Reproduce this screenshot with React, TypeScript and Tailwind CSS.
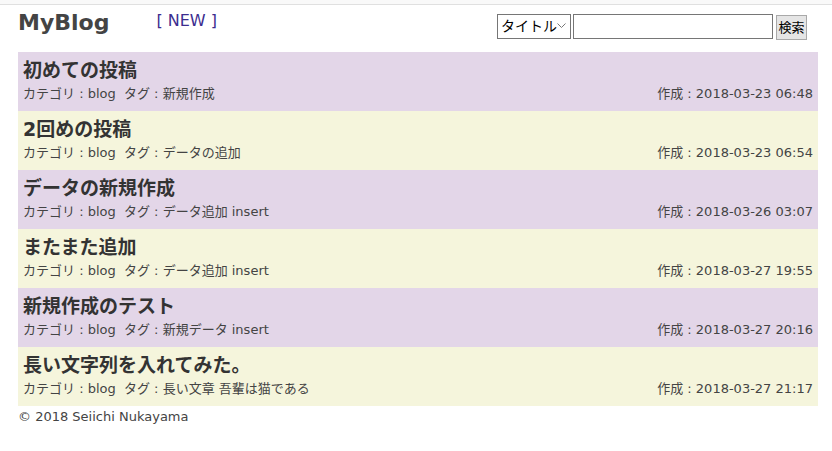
const posts = [
  { title: '初めての投稿', tags: '新規作成', date: '2018-03-23 06:48' },
  { title: '2回めの投稿', tags: 'データの追加', date: '2018-03-23 06:54' },
  { title: 'データの新規作成', tags: 'データ追加 insert', date: '2018-03-26 03:07' },
  { title: 'またまた追加', tags: 'データ追加 insert', date: '2018-03-27 19:55' },
  { title: '新規作成のテスト', tags: '新規データ insert', date: '2018-03-27 20:16' },
  { title: '長い文字列を入れてみた。', tags: '長い文章 吾輩は猫である', date: '2018-03-27 21:17' },
];

export default function App() {
  return (
    <div className="w-[832px] h-[451px] bg-white text-[#444] font-['Verdana','DejaVu_Sans','Noto_Sans_CJK_JP',sans-serif]">
      <div className="h-[5px] bg-[#f9f9f9] border-b border-[#e0e0e0]" />
      <div className="ml-[18px] mr-[14px]">
        <header className="h-[47px] flex items-start">
          <h1 className="mt-[3px] text-[22px] leading-[30px] font-bold text-[#444]">MyBlog</h1>
          <a className="ml-[47px] mt-[5px] text-[16px] leading-[22px] text-[#3c2d8f]">[ NEW ]</a>
          <form className="ml-auto mt-[9px] mr-[11px] flex items-start gap-[2px]">
            <div className="relative w-[74px] h-[25px]">
              <select className="appearance-none w-full h-full border border-[#767676] bg-white text-[14px] text-black pl-[3px]">
                <option>タイトル</option>
              </select>
              <svg className="absolute right-[5px] top-[9px] pointer-events-none" width="9" height="6" viewBox="0 0 9 6" fill="none" stroke="#777" strokeWidth="1">
                <path d="M0.5 0.5 L4.5 4.5 L8.5 0.5" />
              </svg>
            </div>
            <input className="w-[200px] h-[25px] border border-[#767676] bg-white" />
            <button className="ml-[1px] mt-[1px] w-[31px] h-[25px] border border-[#a9a9a9] bg-[#e5e5e5] text-[13px] text-black">検索</button>
          </form>
        </header>
        {posts.map((p, i) => (
          <div key={i} className={`h-[59px] px-[5px] pt-[6px] ${i % 2 === 0 ? 'bg-[#e3d6e8]' : 'bg-[#f5f5dc]'}`}>
            <div className="text-[19px] leading-[24px] font-bold text-[#333]">{p.title}</div>
            <div className="mt-[2px] flex text-[13px] leading-[20px]">
              <span>カテゴリ : blog&nbsp;&nbsp;タグ : {p.tags}</span>
              <span className="ml-auto">作成 : {p.date}</span>
            </div>
          </div>
        ))}
        <footer className="pt-[2px] text-[13px] leading-[18px]">© 2018 Seiichi Nukayama</footer>
      </div>
    </div>
  );
}
